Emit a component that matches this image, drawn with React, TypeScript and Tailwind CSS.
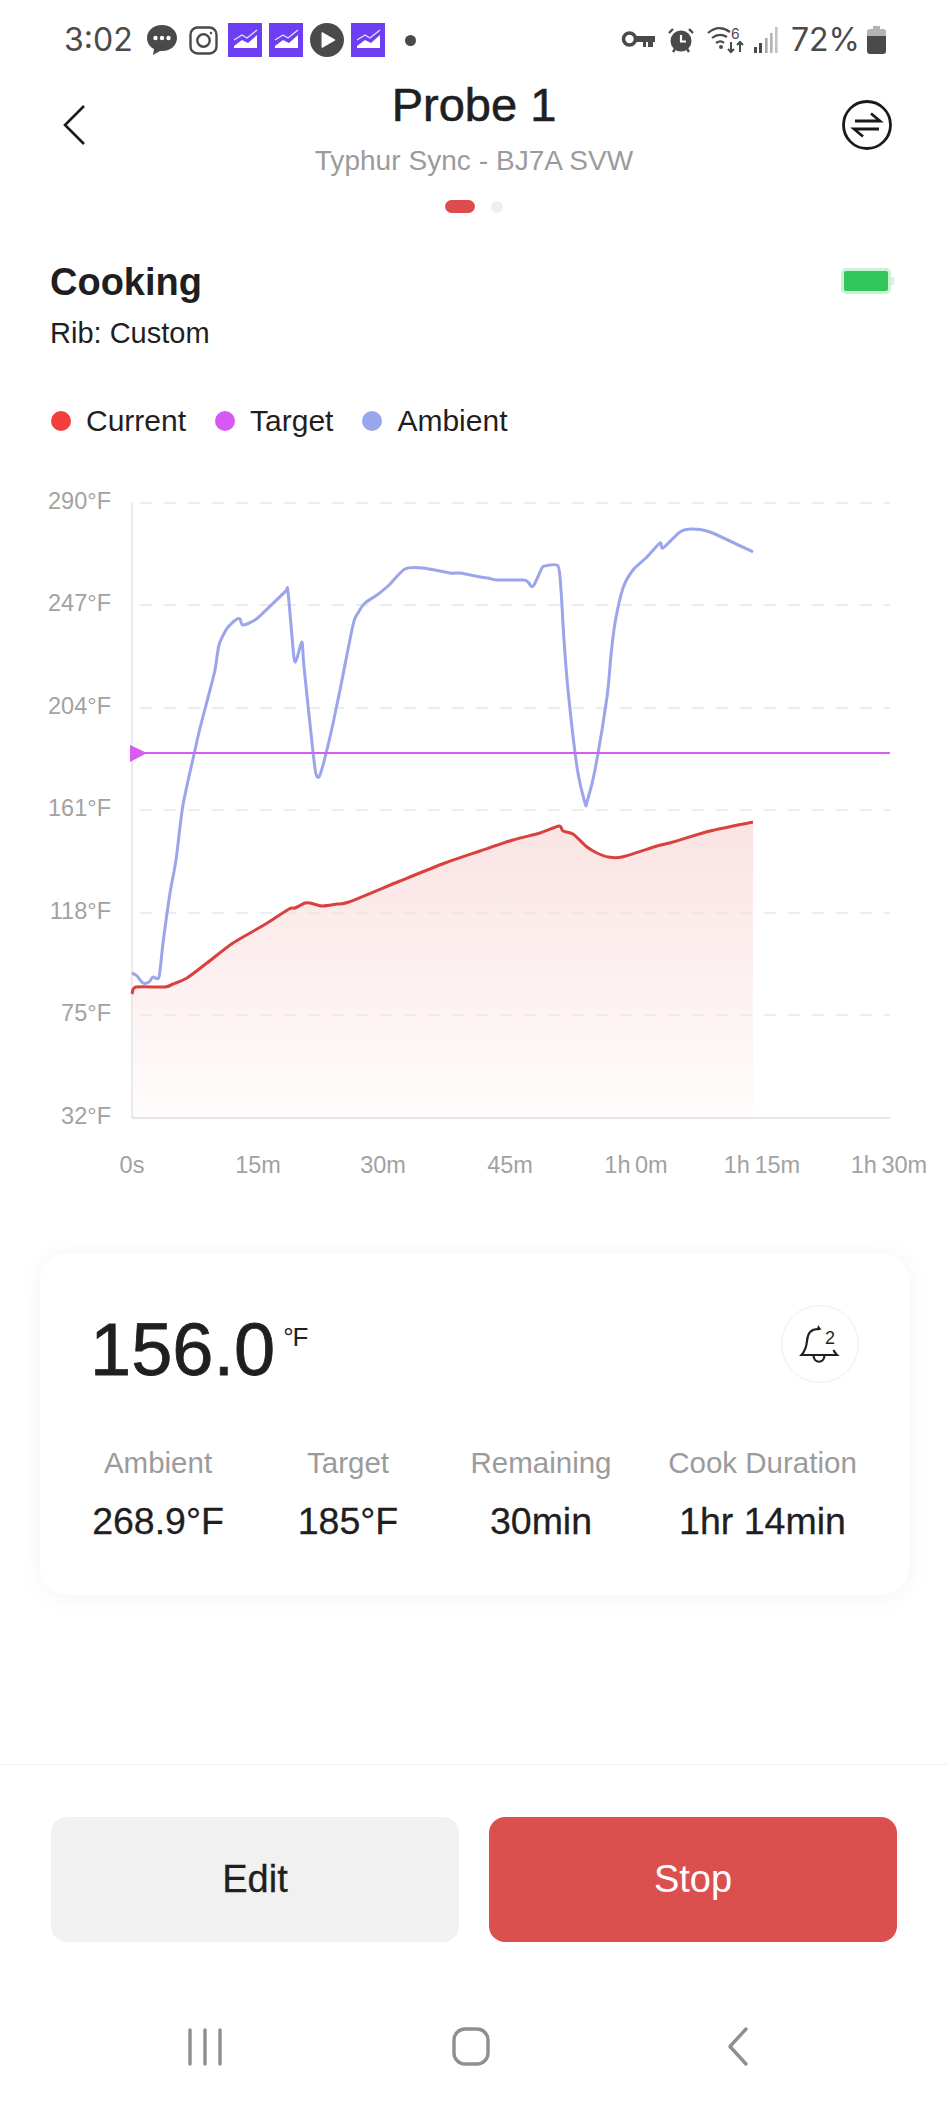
const AMBIENT = "132,973 137,976 143,983 149,982 153,977 159,977 163,943 170,893 176,860 183,805 195,750 200,728 210,690 215,670 219,645 226,630 230,625 237,619 240,619 243,625 255,620 262,614 285,592 288,592 294,658 297,658 302,642 304,667 313,752 316,774 320,775 330,737 340,690 353,625 358,613 365,603 377,595 388,586 405,569 423,568 450,573 460,573 480,577 488,578 497,580 523,580 528,582 531,586 534,585 542,568 545,566 558,566 561,590 564,640 568,690 577,767 585,803 587,802 595,770 607,697 611,655 615,623 623,588 633,570 647,557 660,543 663,548 680,532 692,529 710,532 753,552";
const CURRENT = "132,994 136,987 165,987 173,984 187,978 207,963 233,943 264,925 289,909 295,908 305,903 310,903 322,906 337,904 349,902 400,881 445,863 480,851 513,840 540,833 559,826 563,831 573,834 587,847 597,853 608,857 622,857 657,846 673,842 710,831 753,822";

// catmull-rom through the sampled points, the reference lines are curved
const smooth = (points: string) => {
  const pts = points.split(" ").map((p) => p.split(",").map(Number));
  let d = `M${pts[0][0]} ${pts[0][1]}`;
  for (let i = 0; i < pts.length - 1; i++) {
    const p0 = pts[Math.max(i - 1, 0)];
    const p1 = pts[i];
    const p2 = pts[i + 1];
    const p3 = pts[Math.min(i + 2, pts.length - 1)];
    const c1x = p1[0] + (p2[0] - p0[0]) / 8;
    const c1y = p1[1] + (p2[1] - p0[1]) / 8;
    const c2x = p2[0] - (p3[0] - p1[0]) / 8;
    const c2y = p2[1] - (p3[1] - p1[1]) / 8;
    d += `C${c1x} ${c1y} ${c2x} ${c2y} ${p2[0]} ${p2[1]}`;
  }
  return d;
};

const Y_LABELS = [
  { label: "290°F", y: 503 },
  { label: "247°F", y: 605 },
  { label: "204°F", y: 708 },
  { label: "161°F", y: 810 },
  { label: "118°F", y: 913 },
  { label: "75°F", y: 1015 },
  { label: "32°F", y: 1118 },
];

const X_LABELS = [
  { label: "0s", x: 132 },
  { label: "15m", x: 258 },
  { label: "30m", x: 383 },
  { label: "45m", x: 510 },
  { label: "1h 0m", x: 636 },
  { label: "1h 15m", x: 762 },
  { label: "1h 30m", x: 889 },
];

const STATS = [
  { label: "Ambient", value: "268.9°F", box: "w-[132px]" },
  { label: "Target", value: "185°F", box: "w-[98px] ml-[75px]" },
  { label: "Remaining", value: "30min", box: "w-[140px] ml-[74px]" },
  { label: "Cook Duration", value: "1hr 14min", box: "w-[187px] ml-[58px]" },
];

const LEGEND = [
  { label: "Current", dot: "bg-[#f43e3e]" },
  { label: "Target", dot: "bg-[#d55af5]" },
  { label: "Ambient", dot: "bg-[#98a6ee]" },
];

const StockIcon = () => (
  <div className="w-[34px] h-[34px] bg-[#6c3ff2] shrink-0">
    <svg viewBox="0 0 34 34" className="w-full h-full">
      <path d="M6 17l8-5 5 3 10-8" fill="none" stroke="#e6dcff" strokeWidth="1.4" />
      <path d="M6 23l8-6 6 3 9-8v13H6z" fill="#fff" />
    </svg>
  </div>
);

const StatusBar = () => (
  <div className="h-[77px] flex items-center justify-between pl-[64px] pr-[62px] text-[#4a4a4a] text-[32px] pt-[3px] font-['Inter',sans-serif]">
    <div className="flex items-center">
      <span className="w-[69px] leading-none">3:02</span>
      <svg viewBox="0 0 32 32" className="w-[32px] h-[32px] ml-[13px]" fill="#4a4a4a">
        <path d="M16 1C7 1 1 7 1 14c0 5 3 9 7 11l-1 6 7-4h2c9 0 15-6 15-13S25 1 16 1z" />
        <circle cx="9.5" cy="14" r="2.2" fill="#fff" />
        <circle cx="16" cy="14" r="2.2" fill="#fff" />
        <circle cx="22.5" cy="14" r="2.2" fill="#fff" />
      </svg>
      <svg viewBox="0 0 29 29" className="w-[29px] h-[29px] ml-[11px]" fill="none" stroke="#4a4a4a" strokeWidth="2.4">
        <rect x="1.5" y="1.5" width="26" height="26" rx="7" />
        <circle cx="14.5" cy="14.5" r="6.2" />
        <circle cx="22" cy="7" r="1.2" fill="#4a4a4a" stroke="none" />
      </svg>
      <div className="flex items-center gap-[7px] ml-[10px]">
        <StockIcon />
        <StockIcon />
        <svg viewBox="0 0 34 34" className="w-[34px] h-[34px]">
          <circle cx="17" cy="17" r="17" fill="#4a4a4a" />
          <path d="M12 9.5l13 7.5-13 7.5z" fill="#fff" stroke="#fff" strokeLinejoin="round" />
        </svg>
        <StockIcon />
      </div>
      <div className="w-[11px] h-[11px] rounded-full bg-[#4a4a4a] ml-[20px]" />
    </div>
    <div className="flex items-center">
      <svg viewBox="0 0 34 20" className="w-[34px] h-[20px]" fill="none" stroke="#4a4a4a">
        <circle cx="8.5" cy="9" r="6" strokeWidth="3.6" />
        <path d="M14 6h20v6h-2v5h-5v-5h-2v5h-3v-5h-8z" fill="#4a4a4a" stroke="none" />
      </svg>
      <svg viewBox="0 0 26 26" className="w-[26px] h-[26px] ml-[13px]">
        <circle cx="13" cy="14" r="10.5" fill="#4a4a4a" />
        <path d="M13 8v6.5h5" fill="none" stroke="#fff" strokeWidth="2.2" />
        <path d="M1 6l4-4M25 6l-4-4M5 25l2-3M21 25l-2-3" stroke="#4a4a4a" strokeWidth="2.4" />
      </svg>
      <svg viewBox="0 0 38 28" className="w-[38px] h-[28px] ml-[13px]" fill="none" stroke="#4a4a4a" strokeWidth="2.2">
        <path d="M1 7c7-6 15-6 22-1M5 12c5-4 10-4 15-1M9 17c3-2 6-2 8 0" />
        <circle cx="14" cy="21" r="2" fill="#4a4a4a" stroke="none" />
        <path d="M24 16v10M21 23l3 3 3-3M33 26V16M30 19l3-3 3 3" strokeWidth="2" />
        <text x="24" y="12.5" fontSize="14" fill="#4a4a4a" stroke="none" fontFamily="Inter, sans-serif">6</text>
      </svg>
      <svg viewBox="0 0 24 26" className="w-[24px] h-[26px] ml-[9px]">
        <rect x="0" y="20" width="3" height="6" fill="#4a4a4a" />
        <rect x="5" y="16" width="3" height="10" fill="#4a4a4a" />
        <rect x="11" y="11" width="2.6" height="15" fill="#a8a8a8" />
        <rect x="16" y="6" width="2.6" height="20" fill="#b4b4b4" />
        <rect x="21" y="0" width="2.6" height="26" fill="#c4c4c4" />
      </svg>
      <span className="ml-[13px] leading-none">72%</span>
      <svg viewBox="0 0 19 28" className="w-[19px] h-[28px] ml-[7px]">
        <path d="M6 0h7v3h3a3 3 0 0 1 3 3v5H0V6a3 3 0 0 1 3-3h3z" fill="#b3b3b3" />
        <path d="M0 10h19v15a3 3 0 0 1-3 3H3a3 3 0 0 1-3-3z" fill="#4a4a4a" />
      </svg>
    </div>
  </div>
);

const Chart = () => (
  <svg viewBox="0 480 948 710" className="block w-[948px] h-[710px] mt-[41px]">
    <defs>
      <linearGradient id="currentFill" x1="0" y1="0" x2="0" y2="1">
        <stop offset="0" stopColor="#fae3e3" />
        <stop offset="1" stopColor="#fffcfc" />
      </linearGradient>
    </defs>
    <path d={`${smooth(CURRENT)}L753 1118L132 1118Z`} fill="url(#currentFill)" />
    {Y_LABELS.slice(0, 6).map((row) => (
      <line key={row.y} x1="132" x2="890" y1={row.y} y2={row.y} stroke="#e8e8e8" strokeWidth="1.5" strokeDasharray="12 12" strokeDashoffset="-8" />
    ))}
    <line x1="132" x2="132" y1="503" y2="1118" stroke="#e3e3e8" strokeWidth="1.5" />
    <line x1="132" x2="890" y1="1118" y2="1118" stroke="#dddde8" strokeWidth="1.5" />
    <path d={smooth(AMBIENT)} fill="none" stroke="#9aa5ea" strokeWidth="3" strokeLinejoin="round" />
    <line x1="132" x2="890" y1="753" y2="753" stroke="#d65cf2" strokeWidth="2" />
    <path d="M130 745l17 8-17 9z" fill="#d65cf2" />
    <path d={smooth(CURRENT)} fill="none" stroke="#d9413f" strokeWidth="3" strokeLinejoin="round" />
    <g fontSize="23.5" fill="#a2a2a2">
      {Y_LABELS.map((row) => (
        <text key={row.label} x="111" y={row.y + 6} textAnchor="end">
          {row.label}
        </text>
      ))}
      {X_LABELS.map((col) => (
        <text key={col.label} x={col.x} y="1173" textAnchor="middle" wordSpacing="-2">
          {col.label}
        </text>
      ))}
    </g>
  </svg>
);

const App = () => {
  return (
    <div className="w-[948px] h-[2108px] bg-white overflow-hidden font-['Liberation_Sans',sans-serif] text-[#1f1f1f]">
      <StatusBar />

      <div className="grid grid-cols-[1fr_auto_1fr]">
        <div className="pl-[63px] pt-[28px]">
          <svg viewBox="0 0 22 40" className="w-[22px] h-[40px]" fill="none" stroke="#1a1a1a" strokeWidth="2.6">
            <path d="M21 1L2 20l19 19" />
          </svg>
        </div>
        <div className="flex flex-col items-center">
          <div className="text-[47px] leading-[56px] [-webkit-text-stroke:0.6px_#1f1f1f]">Probe 1</div>
          <div className="text-[28px] leading-[36px] mt-[10px] text-[#9b9b9b] tracking-[0.05px]">Typhur Sync - BJ7A SVW</div>
        </div>
        <div className="flex justify-end pr-[56px] pt-[23px]">
          <svg viewBox="0 0 50 50" className="w-[50px] h-[50px]" fill="none" stroke="#1a1a1a" strokeWidth="2.8">
            <circle cx="25" cy="25" r="23.5" />
            <path d="M13 21h25l-9-7.5M37 29H12l9 7.5" />
          </svg>
        </div>
      </div>

      <div className="flex justify-center items-center gap-[16px] mt-[21px]">
        <div className="w-[30px] h-[13px] rounded-full bg-[#dc4c4c]" />
        <div className="w-[12px] h-[12px] rounded-full bg-[#eeeeee]" />
      </div>

      <div className="flex justify-between mt-[45px] pl-[50px] pr-[54px]">
        <div>
          <div className="text-[38px] leading-[48px] font-bold">Cooking</div>
          <div className="text-[29px] leading-[36px] mt-[9px]">Rib: Custom</div>
        </div>
        <div className="flex items-center h-[26px] mt-[10px]">
          <div className="w-[50px] h-[26px] rounded-[5px] border-[3px] border-[#c9f3d3] bg-[#33c65a]" />
          <div className="w-[3px] h-[8px] bg-[#d8f4de]" />
        </div>
      </div>

      <div className="flex items-center gap-[29px] mt-[52px] pl-[51px] text-[30px] leading-[36px]">
        {LEGEND.map((item) => (
          <div key={item.label} className="flex items-center gap-[15px]">
            <div className={`w-[20px] h-[20px] rounded-full ${item.dot}`} />
            <span>{item.label}</span>
          </div>
        ))}
      </div>

      <Chart />

      <div className="mt-[63px] mx-[40px] w-[869px] h-[342px] rounded-[28px] bg-white shadow-[0_2px_24px_rgba(0,0,0,0.05)] pt-[52px] px-[50px]">
        <div className="flex justify-between">
          <div className="flex items-start mt-[6px]">
            <span className="text-[74px] leading-[78px] [-webkit-text-stroke:0.8px_#1f1f1f]">156.0</span>
            <span className="text-[26px] leading-[24px] ml-[8px] mt-[14px] tracking-[-1px]">°F</span>
          </div>
          <div className="w-[78px] h-[78px] rounded-full border border-[#efefef] flex items-center justify-center">
            <svg viewBox="0 0 44 44" className="w-[44px] h-[44px]" fill="none" stroke="#1f1f1f" strokeWidth="2.2">
              <path d="M20 7C13 7 9.5 12 9 19c-.5 6-2 10-5.5 14H39c-1.5-1.500-2.5-3-3.500-5" />
              <path d="M15.500 33c0 9 11 9 11 0" />
              <path d="M20 3l3.500 4.500-4.500 1z" fill="#1f1f1f" stroke="none" />
              <text x="27" y="21.500" fontSize="18" fill="#1f1f1f" stroke="none">2</text>
            </svg>
          </div>
        </div>
        <div className="flex mt-[56px] ml-[2px]">
          {STATS.map((stat) => (
            <div key={stat.label} className={`${stat.box} flex flex-col items-center whitespace-nowrap`}>
              <div className="text-[29.5px] leading-[36px] text-[#9b9b9b]">{stat.label}</div>
              <div className="text-[37.5px] leading-[40px] mt-[20px] [-webkit-text-stroke:0.3px_#1f1f1f]">{stat.value}</div>
            </div>
          ))}
        </div>
      </div>

      <div className="mt-[169px] border-t border-[#f3f3f3] pt-[52px] px-[51px] flex gap-[30px]">
        <button className="flex-1 h-[125px] rounded-[16px] bg-[#f1f1f1] text-[38px] [-webkit-text-stroke:0.3px_#1f1f1f]">Edit</button>
        <button className="flex-1 h-[125px] rounded-[16px] bg-[#dc4f4f] text-[38px] text-white">Stop</button>
      </div>

      <div className="mt-[85px] flex items-center h-[39px] pl-[187px]">
        <svg viewBox="0 0 36 38" className="w-[36px] h-[38px]" stroke="#8f8f8f" strokeWidth="3.4" strokeLinecap="round">
          <path d="M3 2v34M18 2v34M33 2v34" />
        </svg>
        <svg viewBox="0 0 38 39" className="w-[38px] h-[39px] ml-[229px]" fill="none" stroke="#8f8f8f" strokeWidth="3.4">
          <rect x="2" y="2" width="34" height="35" rx="11" />
        </svg>
        <svg viewBox="0 0 20 39" className="w-[20px] h-[39px] ml-[238px]" fill="none" stroke="#8f8f8f" strokeWidth="3.4" strokeLinecap="round" strokeLinejoin="round">
          <path d="M18 2L2 19.5 18 37" />
        </svg>
      </div>
    </div>
  );
};

export default App;
